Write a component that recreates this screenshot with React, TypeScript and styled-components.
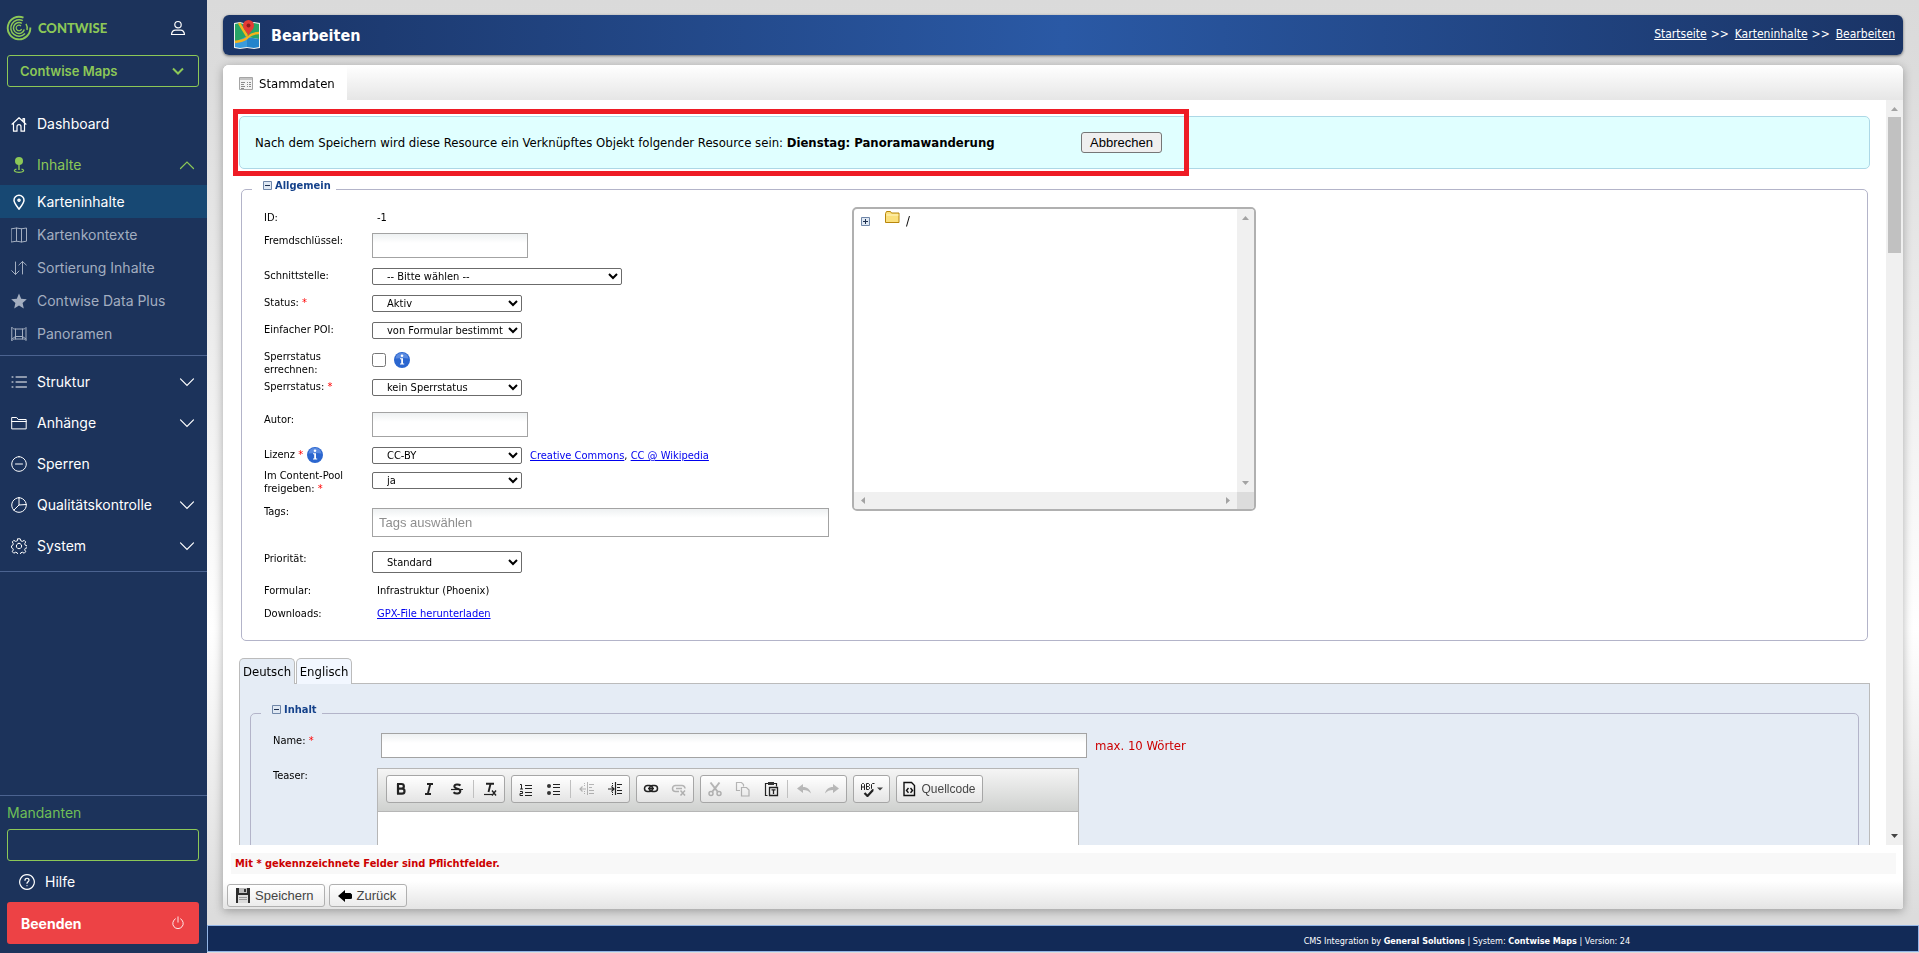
import React from "react";
import styled, { createGlobalStyle, css } from "styled-components";

const TAHOMA = `"DejaVu Sans Condensed", "Noto Sans", sans-serif`;
const ARIAL = `"Liberation Sans", Arial, sans-serif`;
const MENU = `Inter, "Open Sans", sans-serif`;
const GREEN = "#8cc857";

const GlobalStyle = createGlobalStyle`
  * { box-sizing: border-box; }
  body { margin: 0; font-family: ${TAHOMA}; font-size: 11px; color: #000; }
  input, select, button { font: inherit; color: inherit; margin: 0; }
  svg { display: block; flex: none; }
`;

/* ---------- shell ---------- */
const Shell = styled.div`
  display: flex;
  height: 100vh;
  overflow: hidden;
`;

const Sidebar = styled.aside`
  flex: none;
  width: 207px;
  display: flex;
  flex-direction: column;
  background: #1c335b;
  color: #fff;
  font-family: ${MENU};
  font-size: 14px;
`;

const Workspace = styled.div`
  flex: 1;
  min-width: 0;
  display: flex;
  flex-direction: column;
  background: linear-gradient(#dadada 0, #dcdcdc 8%, #fff 66%, #dcdcdc 96%);
`;

/* ---------- sidebar ---------- */
const Brand = styled.div`
  display: flex;
  align-items: center;
  gap: 6px;
  height: 55px;
  padding: 0 21px 0 6px;
  color: ${GREEN};
`;

const BrandName = styled.span`
  flex: 1;
  font-family: Lato, sans-serif;
  font-weight: 900;
  font-size: 13px;
`;

const IconButton = styled.button`
  padding: 0;
  border: 0;
  background: none;
  color: #fff;
`;

const ProductPicker = styled.div`
  position: relative;
  margin: 0 8px 16px 7px;
  color: ${GREEN};
  svg {
    position: absolute;
    right: 15px;
    top: 12px;
    pointer-events: none;
  }
`;

const ProductSelect = styled.select`
  appearance: none;
  width: 100%;
  height: 32px;
  padding: 0 12px;
  border: 1px solid ${GREEN};
  border-radius: 3px;
  background: transparent;
  font-size: 13px;
  font-weight: 600;
`;

const Nav = styled.nav`
  display: flex;
  flex-direction: column;
`;

const NavGroup = styled.div`
  display: flex;
  flex-direction: column;
  padding-bottom: 5px;
  border-bottom: 1px solid #4b6390;
  & + & { padding-top: 5px; }
`;

const NavLink = styled.a<{ $sub?: boolean; $active?: boolean; $open?: boolean }>`
  display: flex;
  align-items: center;
  gap: 10px;
  height: ${(p) => (p.$sub ? 33 : 41)}px;
  padding: 0 12px 0 11px;
  text-decoration: none;
  color: ${(p) => (p.$open ? GREEN : p.$sub && !p.$active ? "#a3aec0" : "#fff")};
  background: ${(p) => (p.$active ? "#174873" : "transparent")};
  span { flex: 1; white-space: nowrap; }
`;

const SidebarFoot = styled.div`
  margin-top: auto;
  padding: 7px 8px 9px 7px;
  border-top: 1px solid #4b6390;
  display: flex;
  flex-direction: column;
`;

const TenantLabel = styled.label`
  color: #6fbf57;
  line-height: 20px;
  margin-bottom: 6px;
`;

const TenantInput = styled.input`
  height: 32px;
  border: 1px solid ${GREEN};
  border-radius: 3px;
  background: transparent;
  padding: 0 12px;
`;

const HelpLink = styled.a`
  display: flex;
  align-items: center;
  gap: 10px;
  height: 41px;
  padding-left: 12px;
  color: #fff;
  text-decoration: none;
`;

const QuitButton = styled.button`
  display: flex;
  align-items: center;
  justify-content: space-between;
  height: 42px;
  padding: 0 14px;
  border: 0;
  border-radius: 3px;
  background: #ed4245;
  font-weight: 700;
`;

/* ---------- title bar ---------- */
const TitleBar = styled.header`
  display: flex;
  align-items: center;
  gap: 10px;
  height: 40px;
  margin: 15px 16px 10px;
  padding: 0 8px 0 10px;
  border-radius: 6px;
  background: linear-gradient(90deg, #1a3466, #2a59a5 50%, #1a3466);
  box-shadow: 0 1px 3px rgba(0, 0, 0, 0.5);
  color: #fff;
`;

const Title = styled.h1`
  flex: 1;
  margin: 0;
  padding-top: 2px;
  font-size: 16px;
  line-height: 20px;
`;

const Crumbs = styled.nav`
  display: flex;
  gap: 4px;
  font-size: 12px;
  line-height: 14px;
  padding-bottom: 2px;
  a { color: #fff; }
  a + span + a { margin-left: 2px; }
`;

/* ---------- card ---------- */
const Card = styled.main`
  flex: 1;
  min-height: 0;
  margin: 0 16px;
  display: flex;
  flex-direction: column;
  border-radius: 6px 6px 3px 3px;
  overflow: hidden;
  background: #fff;
`;

const CardShadow = styled.div`
  flex: 1;
  min-height: 0;
  margin-bottom: 16px;
  display: flex;
  flex-direction: column;
  filter: drop-shadow(0 2px 5px rgba(0, 0, 0, 0.3));
`;

const TabStrip = styled.div`
  display: flex;
  height: 35px;
  background: linear-gradient(#fff, #e6e6e6);
`;

const PageTab = styled.button`
  display: flex;
  align-items: center;
  gap: 6px;
  width: 124px;
  padding: 2px 0 0 16px;
  border: 0;
  background: #fff;
  font-size: 13px;
`;

const ScrollFrame = styled.div`
  flex: 1;
  min-height: 0;
  display: flex;
`;

const Content = styled.div`
  flex: 1;
  min-width: 0;
  overflow: hidden;
  padding: 16px 16px 0;
`;

/* ---------- scrollbars ---------- */
const Track = styled.div<{ $row?: boolean }>`
  flex: none;
  display: flex;
  flex-direction: ${(p) => (p.$row ? "row" : "column")};
  align-items: center;
  justify-content: space-between;
  ${(p) => (p.$row ? css`height: 17px;` : css`width: 17px;`)}
  background: #f0f0f0;
`;

const Thumb = styled.div`
  width: 13px;
  height: 136px;
  margin-bottom: auto;
  background: #c1c1c1;
`;

const Arrow = ({ dir, color = "#a3a3a3" }: { dir: number; color?: string }) => (
  <svg width="17" height="17" viewBox="0 0 17 17">
    <path d="M5 11h7L8.500 7z" fill={color} transform={`rotate(${dir} 8.5 8.5)`} />
  </svg>
);

/* ---------- notice ---------- */
const Notice = styled.div`
  position: relative;
  display: flex;
  align-items: center;
  height: 53px;
  padding: 0 15px;
  border: 1px solid #add8e6;
  border-radius: 5px;
  background: #e0ffff;
  font-size: 13px;
`;

const NoticeText = styled.p`
  margin: 0;
  width: 826px;
`;

const PlainButton = styled.button`
  height: 21px;
  padding: 0 8px;
  border: 1px solid #767676;
  border-radius: 3px;
  background: #efefef;
  font-family: ${ARIAL};
`;

const Marker = styled.div`
  position: absolute;
  left: -7px;
  top: -8px;
  width: 956px;
  height: 67px;
  border: 5px solid #ee1c25;
  pointer-events: none;
`;

/* ---------- form ---------- */
const Section = styled.fieldset<{ $inner?: boolean }>`
  min-width: 0;
  margin: ${(p) => (p.$inner ? "20px 10px 0" : "12px 2px 0")};
  padding: 12px 12px 0 22px;
  height: ${(p) => (p.$inner ? "auto" : "460px")};
  border: 1px solid #b3b4c9;
  border-radius: 5px;
`;

const Legend = styled.legend`
  margin-left: -12px;
  padding: 0 5px 0 11px;
  height: 16px;
  font-size: 11px;
  font-weight: 700;
  color: #15428b;
  button {
    display: flex;
    align-items: center;
    gap: 3px;
    padding: 0;
    border: 0;
    height: 9px;
    background: none;
  }
`;

const Columns = styled.div`
  display: flex;
  align-items: flex-start;
`;

const Rows = styled.div`
  width: 588px;
  padding-top: 1px;
`;

const Row = styled.div<{ $h: number }>`
  display: flex;
  align-items: flex-start;
  height: ${(p) => p.$h}px;
  line-height: 13px;
`;

const Label = styled.label`
  flex: none;
  display: flex;
  flex-wrap: wrap;
  width: 108px;
  padding-top: 1px;
  padding-right: 16px;
`;

const Star = styled.span`
  color: #f00;
`;

const InfoSlot = styled.span`
  margin: -1px 0 -2px 4px;
`;

const Field = styled.div<{ $pad?: number }>`
  flex: 1;
  display: flex;
  align-items: center;
  gap: 8px;
  padding-top: ${(p) => p.$pad || 0}px;
  a { color: #00e; }
`;

const Value = styled.div`
  padding: 1px 0 0 5px;
  a { color: #00e; }
`;

const TextBox = styled.input<{ $w: number; $tall?: boolean }>`
  width: ${(p) => p.$w}px;
  height: ${(p) => (p.$tall ? 29 : 25)}px;
  padding: 0 6px;
  border: 1px solid #a3a3a3;
  background: linear-gradient(#eef1f2, #fff 9px);
  ${(p) => p.$tall && css`font-family: ${ARIAL}; font-size: 13px;`}
  &::placeholder { color: #8e8e8e; }
`;

const Select = styled.select<{ $w?: number; $tall?: boolean }>`
  width: ${(p) => p.$w || 150}px;
  height: ${(p) => (p.$tall ? 22 : 17)}px;
  padding: 0 0 0 10px;
  border: 1px solid #6b6b6b;
  border-radius: 2px;
  background: #fff;
`;

const Check = styled.input`
  width: 14px;
  height: 14px;
`;

/* ---------- tree ---------- */
const Tree = styled.div`
  display: flex;
  flex-direction: column;
  width: 404px;
  height: 304px;
  margin-top: -2px;
  border: 2px solid #b0b0b0;
  border-radius: 5px;
  overflow: hidden;
`;

const TreeTop = styled.div`
  flex: 1;
  display: flex;
`;

const TreeBody = styled.div`
  flex: 1;
  display: flex;
  align-items: flex-start;
  padding: 2px 7px;
  font-size: 13px;
  line-height: 20px;
  svg:first-child { margin: 6px 15px 0 0; }
  svg + svg { margin-right: 6px; }
`;

const TreeBottom = styled.div`
  display: flex;
  background: #dcdcdc;
  & > div { flex: 1; }
  &::after { content: ""; width: 17px; }
`;

/* ---------- language panel ---------- */
const LangTabs = styled.div`
  display: flex;
  gap: 1px;
  margin-top: 17px;
`;

const LangTab = styled.button<{ $active?: boolean }>`
  width: 56px;
  height: 26px;
  margin-bottom: -1px;
  padding: 0;
  border: 1px solid #bbb;
  border-bottom: 0;
  border-radius: 5px 5px 0 0;
  background: ${(p) => (p.$active ? "#e5ecf5" : "#f2f7ff")};
  font-size: 13px;
`;

const LangPanel = styled.div`
  height: 400px;
  padding-top: 1px;
  border: 1px solid #bbb;
  background: #e5ecf5;
`;

const Limit = styled.span`
  color: #c00;
  font-size: 13px;
`;

const Editor = styled.div`
  width: 702px;
  height: 260px;
  margin-left: -4px;
  border: 1px solid #b6b6b6;
  background: #fff;
`;

const Toolbar = styled.div`
  display: flex;
  gap: 6px;
  height: 43px;
  padding: 6px 8px;
  border-bottom: 1px solid #b6b6b6;
  background: linear-gradient(#f5f5f5, #cfd1cf);
`;

const ToolGroup = styled.div`
  display: flex;
  align-items: center;
  height: 28px;
  border: 1px solid #a6a6a6;
  border-radius: 3px;
  background: linear-gradient(#fff, #e4e4e4);
`;

const Tool = styled.button<{ $w?: number }>`
  display: flex;
  align-items: center;
  justify-content: center;
  gap: 5px;
  width: ${(p) => p.$w || 28}px;
  height: 26px;
  padding: 0;
  border: 0;
  background: none;
  font-family: ${ARIAL};
  font-size: 12px;
  color: #474747;
  &:disabled { opacity: 0.3; }
`;

const ToolSep = styled.i`
  width: 1px;
  height: 18px;
  margin: 0 2px;
  background: #c0c0c0;
`;

/* ---------- card foot & page foot ---------- */
const Required = styled.p`
  margin: 8px 7px 0 8px;
  padding: 1px 4px 0;
  line-height: 20px;
  background: #f8f8f8;
  color: #c00;
  font-size: 11px;
  font-weight: 700;
`;

const Actions = styled.div`
  display: flex;
  gap: 4px;
  height: 35px;
  padding: 10px 4px 2px;
  background: linear-gradient(#fff 20%, #e4e4e4);
`;

const ActionButton = styled.button`
  display: flex;
  align-items: center;
  gap: 5px;
  height: 23px;
  padding: 0 10px 0 8px;
  border: 1px solid #b0b0b0;
  border-radius: 3px;
  background: linear-gradient(#fff, #ececec);
  font-family: ${ARIAL};
  font-size: 13px;
  color: #444;
`;

const PageFoot = styled.footer`
  height: 27px;
  margin-bottom: 1px;
  padding-left: 64%;
  border: 1px solid #93b5e6;
  background: #122a57;
  color: #fff;
  font-size: 9px;
  line-height: 30px;
  white-space: nowrap;
`;

/* ---------- drawings ---------- */
const Line = ({ d, size = 16, sw = 1 }: { d: string; size?: number; sw?: number }) => (
  <svg width={size} height={size} viewBox="0 0 16 16" fill="none" stroke="currentColor" strokeWidth={sw} strokeLinecap="round" strokeLinejoin="round">
    <path d={d} />
  </svg>
);

const Chevron = ({ up }: { up?: boolean }) => (
  <svg width="16" height="16" viewBox="0 0 16 16" fill="none" stroke="currentColor" strokeWidth="1.2" strokeLinecap="round">
    <path d={up ? "M1.5 11.5L8 5l6.5 6.5" : "M1.5 4.8L8 11.3l6.5-6.5"} />
  </svg>
);

const LogoMark = () => (
  <svg width="26" height="26" viewBox="0 0 26 26" fill="none" stroke={GREEN}>
    <path d="M17.500 2.700A11.300 11.300 0 1 0 24.300 12.500" strokeWidth="1.900" />
    <path d="M16.800 5.700A8.200 8.200 0 1 0 19 18.600M20 8.800a8.200 8.200 0 0 1 1 6.200" strokeWidth="1.500" />
    <path d="M15.800 8.300A5.500 5.500 0 1 0 18.300 14.500" strokeWidth="1.400" />
    <path d="M15 11A2.800 2.800 0 1 0 15.600 14" strokeWidth="1.200" />
  </svg>
);

const I = {
  user: "M8 1.500a3.200 3.200 0 1 1 0 6.400 3.200 3.200 0 0 1 0-6.400zM1.500 14.500c.3-3 2-4.400 4-4.400h5c2 0 3.700 1.400 4 4.400z",
  home: "M1 8.200L8 1.700l7 6.500M12 5.200V2.600h1.500v4M2.500 7.200v8H6v-4.500a2 2 0 0 1 4 0v4.500h3.500v-8",
  pin: "M8 15.200C5.500 12 3 9 3 6.300a5 5 0 0 1 10 0C13 9 10.500 12 8 15.200zM8 5.200a1 1 0 1 0 .01 0z",
  map: "M.5 1.800l5-.8 5 .8 5-.8v13.200l-5 .8-5-.8-5 .8zM5.500 1v13.200M10.500 1.800V15",
  sort: "M4.500 2v12.500M.7 10.700l3.800 3.800L8 11M11.500 14V1.500M7.900 5l3.600-3.500L15.300 5",
  pano: "M1 1.500c1 1.300 2 1.500 3 1.500h8c1 0 2-.2 3-1.500v13c-1-1.300-2-1.500-3-1.500H4c-1 0-2 .2-3 1.500zM4.500 3v10M11.500 3v10M1 13l3.500-2.500M15 13l-3.500-2.500M4.500 10.500h7",
  list: "M5 3h10.500M5 8h10.500M5 13h10.500M1 3h1M1 8h1M1 13h1",
  folder: "M.7 13.500V2.500h5l1.500 2h8v9zM.7 6.500h14.500",
  minus: "M8 .7a7.300 7.300 0 1 0 .01 0zM4.500 8h7",
  pie: "M8 .7a7.300 7.300 0 1 0 .01 0zM8 .7V8l7.300-.5M8 8l-5.200 5.200",
  power: "M8 1v6M5 3.200a6 6 0 1 0 6 0",
  help: "M8 .7a7.300 7.300 0 1 0 .01 0zM6 6.300c0-2.800 4.200-2.600 4 0-.1 1.300-2 1.500-2 3M8 11.500v.2",
  gear: "M8 5.300a2.700 2.700 0 1 0 .01 0zM6.800.8h2.400l.6 2 1.500.6 1.900-1 1.500 1.500-1 1.900.6 1.500 2 .6v1.800l-2 .6-.6 1.500 1 1.900-1.500 1.500-1.900-1-1.500.6-.6 2H6.800l-.6-2-1.500-.6-1.900 1-1.500-1.500 1-1.900-.6-1.500-1.200-.6V7.900l1.200-.6.6-1.500-1-1.900 1.500-1.500 1.900 1 1.500-.6z",
};

const Star16 = () => (
  <svg width="16" height="16" viewBox="0 0 16 16" fill="currentColor">
    <path d="M8 .5l2.200 5.200 5.600.5-4.200 3.700 1.200 5.500L8 12.500l-4.800 2.900 1.200-5.500L.2 6.200l5.600-.5z" />
  </svg>
);

const PinBase = () => (
  <svg width="16" height="16" viewBox="0 0 16 16">
    <circle cx="8" cy="4" r="4" fill={GREEN} />
    <path d="M7.300 7h1.400v6H7.300z" fill={GREEN} />
    <path d="M5.500 12.200c-4 1-2 3.200 2.500 3.200s6.500-2.200 2.500-3.200" fill="none" stroke={GREEN} strokeWidth="1.200" />
  </svg>
);

const MapLogo = () => (
  <svg width="28" height="30" viewBox="0 0 28 30">
    <path d="M1 3l6-1 7 2 7-2 6 1v25l-6 1-7-1-7 1-6-1z" fill="#f1f1ee" />
    <path d="M2 4l5-1 7 2 7-2 5 1v15L14 17 2 23z" fill="#27a566" />
    <path d="M2 22l12-6v11l-7 1-5-1z" fill="#3a9bdc" />
    <path d="M14 17l12 2v8l-5 1-7-1z" fill="#2584cb" />
    <path d="M6 3l8 13M26 13c-5 0-8 1-11 4-3 4-8 4-13 5" fill="none" stroke="#f6b21b" strokeWidth="2.400" />
    <path d="M15.500 16C14 11 10 10 10 5.500a5.500 5.500 0 0 1 11 0C21 10 17 11 15.500 16z" fill="#e53b35" />
    <circle cx="15.500" cy="5.500" r="2" fill="#8f1d1d" />
  </svg>
);

const FormIcon = () => (
  <svg width="14" height="14" viewBox="0 0 14 14">
    <path d="M.5.5h13v12H.5z" fill="#f3f3f3" stroke="#a5a5a5" />
    <path d="M1 1h12v2H1z" fill="#c4c4c4" />
    <path d="M2 5.500h4M2 7.500h3M2 9.500h4M2 11.500h3M8 5.500h1M10 5.500h2M8 7.500h1M10 7.500h2M8 9.500h1M10 9.500h2" stroke="#8a8a8a" />
  </svg>
);

const Toggle = ({ plus }: { plus?: boolean }) => (
  <svg width="9" height="9" viewBox="0 0 9 9">
    <path d="M.5.5h8v8h-8z" fill="#dfe8f3" stroke="#6f86a8" />
    <path d={plus ? "M2 4.500h5M4.500 2v5" : "M2 4.500h5"} stroke="#1d2f4f" />
  </svg>
);

const Info = () => (
  <svg width="16" height="16" viewBox="0 0 16 16">
    <circle cx="8" cy="8" r="8" fill="#2b66cf" />
    <path d="M1.500 6.500a6.600 6.600 0 0 1 13 0C10 5.500 6 6 1.500 6.500z" fill="#5b8be0" />
    <circle cx="8" cy="3.800" r="1.300" fill="#fff" />
    <path d="M6 6.300h3v5.200h1.200v1H6v-1h1.200V7.300H6z" fill="#fff" />
  </svg>
);

const FolderIcon = () => (
  <svg width="15" height="13" viewBox="0 0 15 13">
    <path d="M.5 11.500v-9l1-2h4l1 1.500h7.500v9.500z" fill="#fbe07c" stroke="#b8860b" />
    <path d="M1.500 4h12" stroke="#fff6c4" />
  </svg>
);

const Floppy = () => (
  <svg width="14" height="15" viewBox="0 0 14 15">
    <path d="M0 0h14v15H0z" fill="#2c2c2c" />
    <path d="M3 0h8v5H3z" fill="#bdbdbd" />
    <path d="M8 1h2v3H8z" fill="#333" />
    <path d="M2 7h10v8H2z" fill="#dcdcdc" />
    <path d="M3 9.500h8M3 11.500h8" stroke="#999" />
  </svg>
);

const BackArrow = () => (
  <svg width="14" height="14" viewBox="0 0 14 14">
    <path d="M0 7l7-6v3h5.500l1.500 1.500v4L12.500 10H7v3z" fill="#000" />
  </svg>
);

const ic = (children: React.ReactNode) => (
  <svg width="16" height="16" viewBox="0 0 16 16" fill="none" stroke="#222" strokeWidth="1.500">
    {children}
  </svg>
);

const T = {
  bold: ic(<path d="M4 3h4.500a2.200 2.200 0 0 1 0 4.700H5.500M5.500 7.700H9a2.500 2.500 0 0 1 0 5H4M5 3v9.700" strokeWidth="2.200" />),
  italic: ic(<path d="M6 3h6M4 13h6M9.300 3l-2.500 10" strokeWidth="1.900" />),
  strike: ic(<><path d="M11.500 4.500C10 3 5.500 2.800 5.300 5.300c0 3 6 1.700 6 4.800-.2 3-5 2.800-6.800 1.100" strokeWidth="2" /><path d="M2 8.500h12" strokeWidth="1.200" /></>),
  clear: ic(<><path d="M4 2.800h8M8.500 3L6.500 11" strokeWidth="1.900" /><path d="M2 13.500h8" strokeWidth="1.200" /><path d="M10 9.500l4 5M14 9.500l-4 5" strokeWidth="1.400" /></>),
  ol: ic(<><path d="M7 4.500h7M7 7.500h7M7 11.500h7M7 14.500h7" strokeWidth="1" /><path d="M2 3.500h1.500V8M2 8h3M2 10.500h2.500v2H2v2h3" strokeWidth="1" /></>),
  ul: ic(<><path d="M7 3.500h7M7 6.500h7M7 10.500h7M7 13.500h7" strokeWidth="1" /><circle cx="3" cy="5" r="2" fill="#333" stroke="none" /><circle cx="3" cy="12" r="2" fill="#333" stroke="none" /></>),
  outdent: ic(<><path d="M8.500 1v13" strokeWidth="1" /><path d="M5.500 2v3M5.500 10v3" strokeDasharray="1 1" strokeWidth="1" /><path d="M10 3.500h5M10 6.500h3M10 9.500h5M10 12.500h5M1 8h6M3.500 5.500L1 8l2.500 2.500" strokeWidth="1.200" /></>),
  indent: ic(<><path d="M5.500 2v3M5.500 11v3" strokeDasharray="1 1" strokeWidth="1" /><path d="M8.500 1v13M10 3.500h5M10 6.500h3M10 9.500h5M10 12.500h5M1 8h6M4.500 5.500L7 8l-2.500 2.500" strokeWidth="1.200" /></>),
  link: ic(<><rect x="1.500" y="4.500" width="8" height="6" rx="3" /><rect x="6.500" y="4.500" width="8" height="6" rx="3" /><path d="M5 7.500h6" /></>),
  unlink: ic(<><path d="M8 10.500H4.500a3 3 0 0 1 0-6H11a3 3 0 0 1 3 3M5 7.500h6" /><path d="M9.500 9.500l4.500 5M14 9.500l-4.500 5" /></>),
  cut: ic(<><path d="M3.500 1.500l7 9M12.500 1.500l-7 9" strokeWidth="2" /><circle cx="4" cy="12.500" r="2" /><circle cx="12" cy="12.500" r="2" /></>),
  copy: ic(<path d="M5 9.500H1.500v-8h5l2 2v2M6.500 6.500h5l2.500 2.500v6H6.500z" strokeWidth="1.200" />),
  paste: ic(<><path d="M5 2.500H2.500v12h2M11 2.500h2.500v3" strokeWidth="1.200" /><path d="M5 1h6v3H5z" fill="#333" stroke="none" /><path d="M6.500 6.500h8v8h-8zM8.500 8.800h4M10.500 9v4" strokeWidth="1.300" /></>),
  undo: ic(<path d="M1 7.500L7 3v3c4.500 0 7 2.500 8 6.500-2-2.500-4.500-3.500-8-3.500v3z" fill="#333" stroke="none" />),
  redo: ic(<path d="M15 7.500L9 3v3c-4.500 0-7 2.500-8 6.500C3 10 5.500 9 9 9v3z" fill="#333" stroke="none" />),
  spell: (
    <svg width="24" height="16" viewBox="0 0 24 16" fill="none" stroke="#222" strokeWidth="1">
      <path d="M1.500 9V3.500l1-1h1l1 1V9M1.500 6h3M6.500 8.500v-6h2l1 1v1l-1 1h-2M8.500 5.500l1 1v1l-1 1h-2M14.500 2.500h-2l-1 1v4l1 1h1" />
      <path d="M4.500 12l3 3 5.500-6" strokeWidth="2.200" />
      <path d="M17 6.500h6l-3 3z" fill="#444" stroke="none" />
    </svg>
  ),
  source: (
    <svg width="13" height="16" viewBox="0 0 13 16" fill="none" stroke="#111" strokeWidth="1.400">
      <path d="M1 1.500h7.500l3 3v10H1z" />
      <path d="M5.500 7L3.500 9.500l2 2.300M7.500 7l2 2.500-2 2.300" />
    </svg>
  ),
};

const subItems = [
  { label: "Karteninhalte", icon: <Line d={I.pin} sw={1.5} />, active: true },
  { label: "Kartenkontexte", icon: <Line d={I.map} /> },
  { label: "Sortierung Inhalte", icon: <Line d={I.sort} /> },
  { label: "Contwise Data Plus", icon: <Star16 /> },
  { label: "Panoramen", icon: <Line d={I.pano} /> },
];

const mainItems = [
  { label: "Struktur", icon: I.list, more: true },
  { label: "Anhänge", icon: I.folder, more: true },
  { label: "Sperren", icon: I.minus },
  { label: "Qualitätskontrolle", icon: I.pie, more: true },
  { label: "System", icon: I.gear, more: true },
];

const SelectRow = ({ id, label, star, value, h, w, pad, tall, info, children }: {
  id: string; label: React.ReactNode; star?: boolean; value: string; h: number; w?: number; pad?: number; tall?: boolean; info?: boolean; children?: React.ReactNode;
}) => (
  <Row $h={h}>
    <Label htmlFor={id}>
      <span>{label}{star && <Star> *</Star>}</span>
      {info && <InfoSlot><Info /></InfoSlot>}
    </Label>
    <Field $pad={pad}>
      <Select id={id} $w={w} $tall={tall}><option>{value}</option></Select>
      {children}
    </Field>
  </Row>
);

export default function App() {
  return (
    <>
      <GlobalStyle />
      <Shell>
        <Sidebar>
          <Brand>
            <LogoMark />
            <BrandName>CONTWISE</BrandName>
            <IconButton aria-label="Benutzer"><Line d={I.user} sw={1.2} /></IconButton>
          </Brand>
          <ProductPicker>
            <ProductSelect aria-label="Produkt"><option>Contwise Maps</option></ProductSelect>
            <svg width="12" height="8" viewBox="0 0 12 8" fill="none" stroke="currentColor" strokeWidth="2"><path d="M1 1.500l5 5 5-5" /></svg>
          </ProductPicker>
          <Nav>
            <NavGroup>
              <NavLink href="#"><Line d={I.home} sw={1.2} /><span>Dashboard</span></NavLink>
              <NavLink href="#" $open><PinBase /><span>Inhalte</span><Chevron up /></NavLink>
              {subItems.map((s) => (
                <NavLink key={s.label} href="#" $sub $active={s.active}>{s.icon}<span>{s.label}</span></NavLink>
              ))}
            </NavGroup>
            <NavGroup>
              {mainItems.map((m) => (
                <NavLink key={m.label} href="#"><Line d={m.icon} /><span>{m.label}</span>{m.more && <Chevron />}</NavLink>
              ))}
            </NavGroup>
          </Nav>
          <SidebarFoot>
            <TenantLabel htmlFor="tenant">Mandanten</TenantLabel>
            <TenantInput id="tenant" />
            <HelpLink href="#"><Line d={I.help} sw={1.2} /><span>Hilfe</span></HelpLink>
            <QuitButton>Beenden<Line d={I.power} size={14} /></QuitButton>
          </SidebarFoot>
        </Sidebar>

        <Workspace>
          <TitleBar>
            <MapLogo />
            <Title>Bearbeiten</Title>
            <Crumbs>
              <a href="#">Startseite</a><span>&gt;&gt;</span>
              <a href="#">Karteninhalte</a><span>&gt;&gt;</span>
              <a href="#">Bearbeiten</a>
            </Crumbs>
          </TitleBar>

          <CardShadow>
            <Card>
              <TabStrip>
                <PageTab><FormIcon />Stammdaten</PageTab>
              </TabStrip>
              <ScrollFrame>
                <Content>
                  <Notice>
                    <NoticeText>
                      Nach dem Speichern wird diese Resource ein Verknüpftes Objekt folgender Resource sein: <b>Dienstag: Panoramawanderung</b>
                    </NoticeText>
                    <PlainButton>Abbrechen</PlainButton>
                    <Marker />
                  </Notice>

                  <Section>
                    <Legend><button><Toggle />Allgemein</button></Legend>
                    <Columns>
                      <Rows>
                        <Row $h={23}><Label as="span">ID:</Label><Value>-1</Value></Row>
                        <Row $h={35}><Label htmlFor="fk">Fremdschlüssel:</Label><TextBox id="fk" $w={156} /></Row>
                        <SelectRow id="iface" label="Schnittstelle:" value="-- Bitte wählen --" h={27} w={250} />
                        <SelectRow id="status" label="Status:" star value="Aktiv" h={27} />
                        <SelectRow id="poi" label="Einfacher POI:" value="von Formular bestimmt" h={27} />
                        <Row $h={30}>
                          <Label htmlFor="calc">Sperrstatus errechnen:</Label>
                          <Field $pad={3}><Check id="calc" type="checkbox" /><Info /></Field>
                        </Row>
                        <SelectRow id="lock" label="Sperrstatus:" star value="kein Sperrstatus" h={33} />
                        <Row $h={35}><Label htmlFor="author">Autor:</Label><TextBox id="author" $w={156} /></Row>
                        <SelectRow id="lic" label="Lizenz" star info value="CC-BY" h={21}>
                          <span><a href="#">Creative Commons</a>, <a href="#">CC @ Wikipedia</a></span>
                        </SelectRow>
                        <SelectRow id="pool" label={<>Im Content-Pool<br />freigeben:</>} star value="ja" h={36} pad={4} />
                        <Row $h={47}>
                          <Label htmlFor="tags">Tags:</Label>
                          <Field $pad={4}><TextBox id="tags" $w={457} $tall placeholder="Tags auswählen" /></Field>
                        </Row>
                        <SelectRow id="prio" label="Priorität:" value="Standard" h={32} tall />
                        <Row $h={23}><Label as="span">Formular:</Label><Value>Infrastruktur (Phoenix)</Value></Row>
                        <Row $h={23}><Label as="span">Downloads:</Label><Value><a href="#">GPX-File herunterladen</a></Value></Row>
                      </Rows>
                      <Tree>
                        <TreeTop>
                          <TreeBody><Toggle plus /><FolderIcon />/</TreeBody>
                          <Track><Arrow dir={0} /><Arrow dir={180} /></Track>
                        </TreeTop>
                        <TreeBottom><Track $row><Arrow dir={-90} /><Arrow dir={90} /></Track></TreeBottom>
                      </Tree>
                    </Columns>
                  </Section>

                  <LangTabs>
                    <LangTab $active>Deutsch</LangTab>
                    <LangTab>Englisch</LangTab>
                  </LangTabs>
                  <LangPanel>
                    <Section $inner>
                      <Legend><button><Toggle />Inhalt</button></Legend>
                      <Row $h={35}>
                        <Label htmlFor="name"><span>Name:<Star> *</Star></span></Label>
                        <Field><TextBox id="name" $w={706} /><Limit>max. 10 Wörter</Limit></Field>
                      </Row>
                      <Row $h={270}>
                        <Label as="span">Teaser:</Label>
                        <Editor>
                          <Toolbar>
                            <ToolGroup>
                              <Tool aria-label="Fett">{T.bold}</Tool>
                              <Tool aria-label="Kursiv">{T.italic}</Tool>
                              <Tool aria-label="Durchgestrichen">{T.strike}</Tool>
                              <ToolSep />
                              <Tool aria-label="Formatierung entfernen">{T.clear}</Tool>
                            </ToolGroup>
                            <ToolGroup>
                              <Tool aria-label="Nummerierte Liste">{T.ol}</Tool>
                              <Tool aria-label="Liste">{T.ul}</Tool>
                              <ToolSep />
                              <Tool aria-label="Einzug verkleinern" disabled>{T.outdent}</Tool>
                              <Tool aria-label="Einzug vergrößern">{T.indent}</Tool>
                            </ToolGroup>
                            <ToolGroup>
                              <Tool aria-label="Link">{T.link}</Tool>
                              <Tool aria-label="Link entfernen" disabled>{T.unlink}</Tool>
                            </ToolGroup>
                            <ToolGroup>
                              <Tool aria-label="Ausschneiden" disabled>{T.cut}</Tool>
                              <Tool aria-label="Kopieren" disabled>{T.copy}</Tool>
                              <Tool aria-label="Als Text einfügen">{T.paste}</Tool>
                              <ToolSep />
                              <Tool aria-label="Rückgängig" disabled>{T.undo}</Tool>
                              <Tool aria-label="Wiederherstellen" disabled>{T.redo}</Tool>
                            </ToolGroup>
                            <ToolGroup>
                              <Tool aria-label="Rechtschreibprüfung" $w={35}>{T.spell}</Tool>
                            </ToolGroup>
                            <ToolGroup>
                              <Tool $w={85}>{T.source}Quellcode</Tool>
                            </ToolGroup>
                          </Toolbar>
                        </Editor>
                      </Row>
                    </Section>
                  </LangPanel>
                </Content>
                <Track><Arrow dir={0} /><Thumb /><Arrow dir={180} color="#444" /></Track>
              </ScrollFrame>
              <Required>Mit * gekennzeichnete Felder sind Pflichtfelder.</Required>
              <Actions>
                <ActionButton><Floppy />Speichern</ActionButton>
                <ActionButton><BackArrow />Zurück</ActionButton>
              </Actions>
            </Card>
          </CardShadow>

          <PageFoot>
            CMS Integration by <b>General Solutions</b> | System: <b>Contwise Maps</b> | Version: 24
          </PageFoot>
        </Workspace>
      </Shell>
    </>
  );
}
